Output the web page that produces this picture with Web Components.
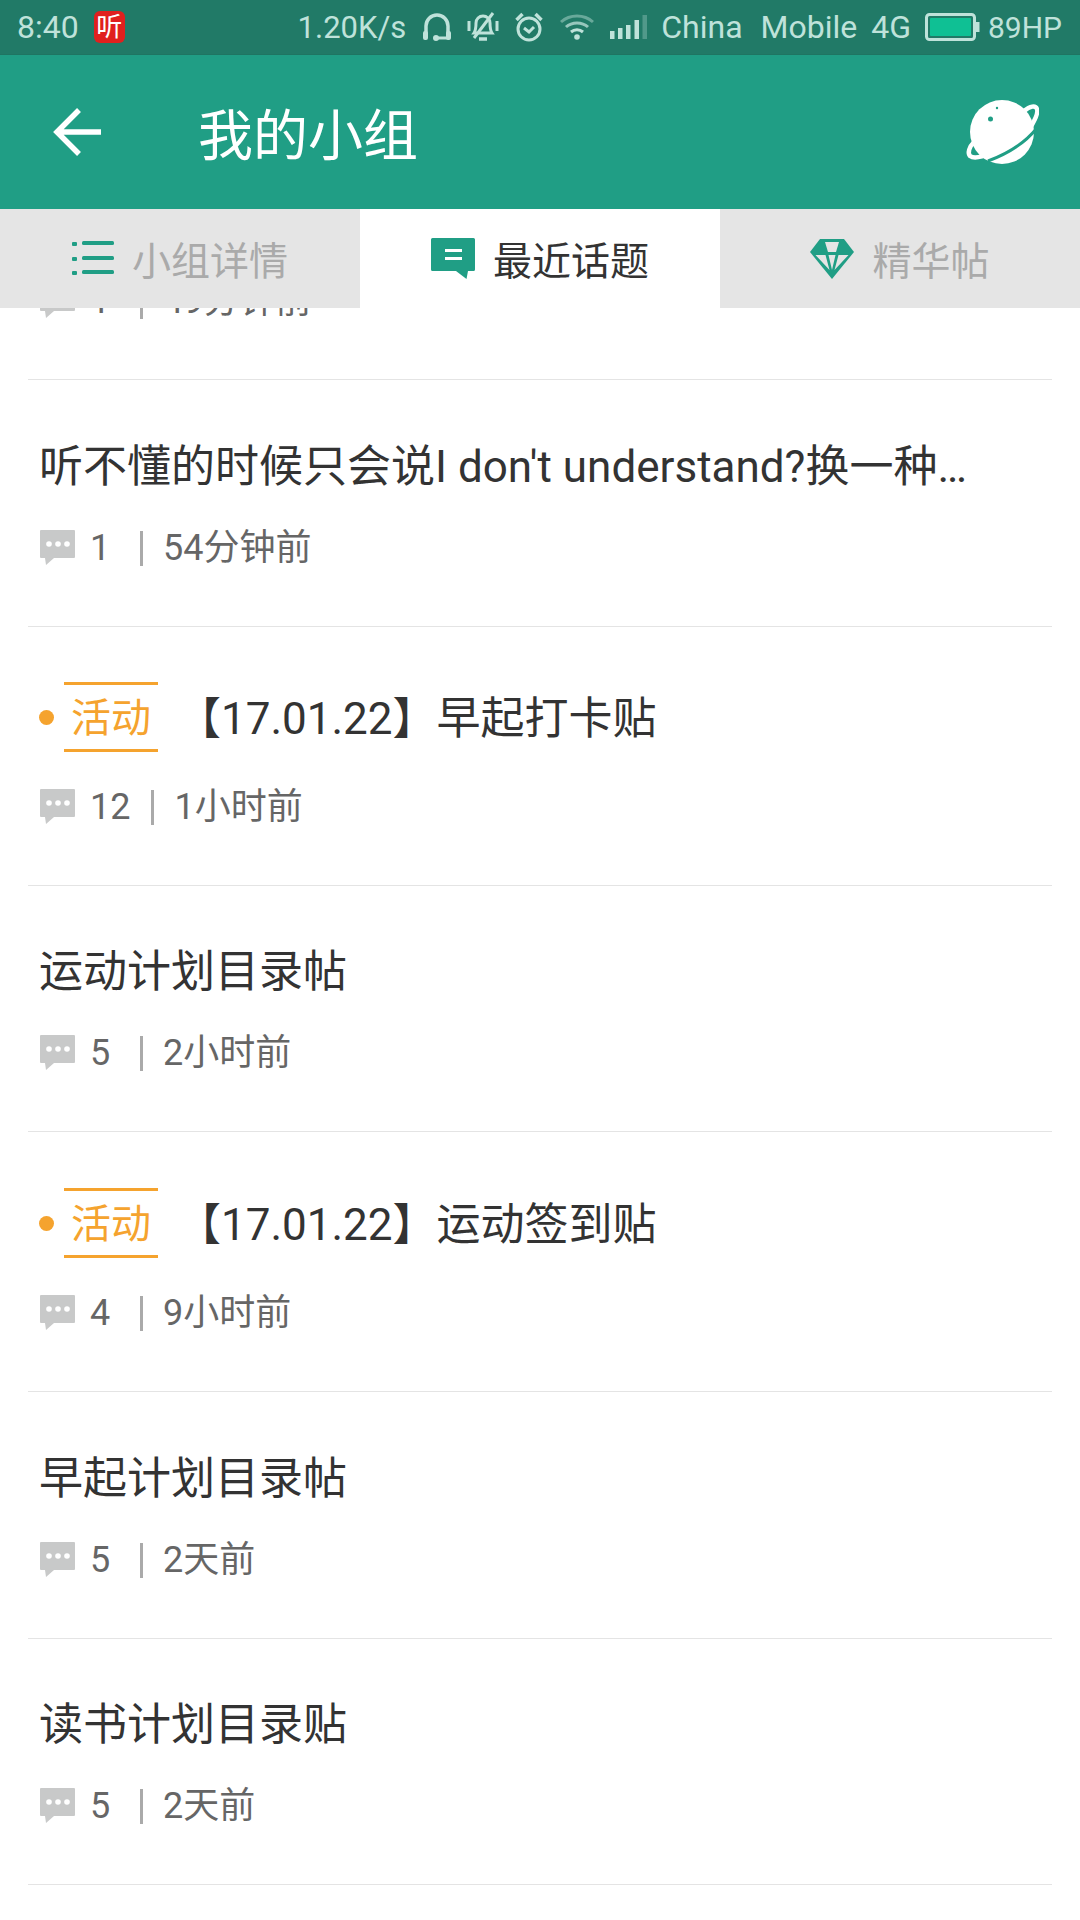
<!DOCTYPE html>
<html>
<head>
<meta charset="utf-8">
<style>
  html, body { margin: 0; padding: 0; background: #fff; }
  body {
    width: 1080px;
    height: 1920px;
    overflow: hidden;
    font-family: Roboto, "Noto Sans CJK SC", sans-serif;
  }
</style>
</head>
<body>
<status-bar></status-bar>
<app-bar title="我的小组"></app-bar>
<tab-bar>
  <tab-item icon="list">小组详情</tab-item>
  <tab-item icon="chat" active>最近话题</tab-item>
  <tab-item icon="gem">精华帖</tab-item>
</tab-bar>
<topic-list>
  <topic-row clipped count="1" time="49分钟前" height="72"></topic-row>
  <topic-row count="1" time="54分钟前" height="247">听不懂的时候只会说I don't understand?换一种…</topic-row>
  <topic-row activity count="12" time="1小时前" height="259">【17.01.22】早起打卡贴</topic-row>
  <topic-row count="5" time="2小时前" height="246">运动计划目录帖</topic-row>
  <topic-row activity count="4" time="9小时前" height="260">【17.01.22】运动签到贴</topic-row>
  <topic-row count="5" time="2天前" height="247">早起计划目录帖</topic-row>
  <topic-row count="5" time="2天前" height="246">读书计划目录贴</topic-row>
</topic-list>

<script>
const FONT = 'Roboto, "Noto Sans CJK SC", sans-serif';

class StatusBar extends HTMLElement {
  constructor() {
    super();
    this.attachShadow({ mode: 'open' });
    this.shadowRoot.innerHTML = `
      <style>
        :host {
          display: flex;
          align-items: center;
          height: 55px;
          box-sizing: border-box;
          padding: 0 18px 0 17px;
          background: #217a67;
          color: #bfe2da;
          font: 32px ${FONT};
          border-bottom: 1px solid #1f7562;
        }
        .app {
          width: 31px; height: 32px; margin-left: 15px;
          border-radius: 6px; background: #e0201e; color: #fff;
          display: flex; align-items: center; justify-content: center;
          font-size: 26px; line-height: 1;
        }
        .right { margin-left: auto; display: flex; align-items: center; }
        svg { display: block; }
        .carrier { word-spacing: 10px; }
      </style>
      <span>8:40</span>
      <span class="app">听</span>
      <div class="right">
        <span style="font-size:31px">1.20K/s</span>
        <svg style="margin-left:16px" width="30" height="28" viewBox="0 0 30 28" fill="none" stroke="#bfe2da" stroke-width="3.5">
          <path d="M4 21V13a11 11 0 0 1 22 0v8"/>
          <rect x="1" y="18" width="5" height="9" rx="2" fill="#bfe2da" stroke="none"/><rect x="24" y="18" width="5" height="9" rx="2" fill="#bfe2da" stroke="none"/>
          <path d="M14 25h12" stroke-width="3"/><circle cx="14" cy="25" r="3" fill="#bfe2da" stroke="none"/>
        </svg>
        <svg style="margin-left:15px" width="32" height="30" viewBox="0 0 32 30" fill="none" stroke="#bfe2da" stroke-width="3">
          <path d="M7 21c2-3 2-6 2-10a7 7 0 0 1 14 0c0 4 0 7 2 10z"/><path d="M12 27h8" stroke-width="3.5"/><path d="M26 1L7 26"/><path d="M2 9v10M30 9v10"/>
        </svg>
        <svg style="margin-left:16px" width="28" height="30" viewBox="0 0 28 30" fill="none" stroke="#bfe2da" stroke-width="3">
          <circle cx="14" cy="17" r="11"/><path d="M9 16l5 4 5-5"/><path d="M1.5 8l6-6M26.500 8l-6-6" stroke-width="3.5"/>
        </svg>
        <svg style="margin-left:16px" width="36" height="26" viewBox="0 0 36 26" fill="none" stroke="#bfe2da" stroke-width="3">
          <path d="M2 8C11 0 25 0 34 8" opacity=".45"/><path d="M7 13C13 7.500 23 7.500 29 13" opacity=".75"/><path d="M12 18c3.500-3 8.500-3 12 0"/><circle cx="18" cy="23" r="2.800" fill="#bfe2da" stroke="none"/>
        </svg>
        <svg style="margin-left:15px" width="37" height="24" viewBox="0 0 37 24" fill="#bfe2da">
          <rect x="0" y="16" width="4.500" height="8"/><rect x="8" y="13" width="4.500" height="11"/><rect x="16" y="10" width="4.500" height="14"/><rect x="24.500" y="5" width="4.500" height="19"/><rect x="32.500" y="0" width="4.500" height="24" opacity=".3"/>
        </svg>
        <span class="carrier" style="margin-left:14px">China Mobile</span>
        <span style="margin-left:14px">4G</span>
        <svg style="margin-left:14px" width="55" height="28" viewBox="0 0 55 28">
          <rect x="1.500" y="1.500" width="48" height="25" rx="3" fill="none" stroke="#bfe2da" stroke-width="3"/>
          <rect x="5" y="5" width="41" height="18" rx="1" fill="#0fc094"/>
          <rect x="51" y="9" width="3.500" height="10" fill="#bfe2da"/>
        </svg>
        <span style="margin-left:8px;font-size:30px">89HP</span>
      </div>
    `;
  }
}
customElements.define('status-bar', StatusBar);

class AppBar extends HTMLElement {
  constructor() {
    super();
    this.attachShadow({ mode: 'open' });
    this.shadowRoot.innerHTML = `
      <style>
        :host {
          display: flex;
          align-items: center;
          height: 154px;
          padding: 0 41px 0 52px;
          background: #209e85;
          color: #fff;
          font: 55px ${FONT};
        }
        h1 { margin: 0 0 3px 96px; font: inherit; }
        .planet { margin-left: auto; }
        svg { display: block; }
      </style>
      <svg style="margin-bottom:1px" width="50" height="50" viewBox="0 0 50 50" fill="none" stroke="#fff" stroke-width="5.500">
        <path d="M49 25H6M27 3L5 25l22 22"/>
      </svg>
      <h1>${this.getAttribute('title')}</h1>
      <svg class="planet" width="74" height="66" viewBox="15 15 74 66" fill="none">
        <circle cx="52" cy="48" r="32" fill="#fff"/>
        <path d="M87 44C75 59 57 70 38 77" stroke="#209e85" stroke-width="3"/>
        <path d="M74 27C80 22 85.500 21 87 25C88.500 29 85 36 80 44" stroke="#fff" stroke-width="4.500"/>
        <path d="M24 58C19 63 17.500 69 20 72C24 75 32 73 41 69" stroke="#fff" stroke-width="4.500"/>
        <circle cx="40.500" cy="35" r="2.500" fill="#209e85"/><circle cx="47" cy="24" r="1.200" fill="#209e85"/>
      </svg>
    `;
  }
}
customElements.define('app-bar', AppBar);

class TabBar extends HTMLElement {
  constructor() {
    super();
    this.attachShadow({ mode: 'open' });
    this.shadowRoot.innerHTML = `
      <style>
        :host { display: grid; grid-template-columns: 360px 360px 360px; height: 99px; }
      </style>
      <slot></slot>
    `;
  }
}
customElements.define('tab-bar', TabBar);

const TAB_ICONS = {
  list: `<svg width="42" height="36" viewBox="0 0 42 36" fill="#209e85">
      <rect x="0" y="1" width="5" height="4" rx="1"/><rect x="10" y="0" width="32" height="4" rx="1.500"/>
      <rect x="0" y="16" width="5" height="4" rx="1"/><rect x="10" y="15" width="32" height="4" rx="1.500"/>
      <rect x="0" y="30" width="5" height="4" rx="1"/><rect x="10" y="29" width="32" height="4" rx="1.500"/>
    </svg>`,
  chat: `<svg width="44" height="41" viewBox="0 0 44 41">
      <path d="M1.500 0h41A1.500 1.500 0 0 1 44 1.500v30a1.500 1.500 0 0 1-1.500 1.500H37l-1.500 8L25 33H1.500A1.500 1.500 0 0 1 0 31.500v-30A1.500 1.500 0 0 1 1.500 0z" fill="#209e85"/>
      <rect x="14" y="11" width="17" height="3" fill="#fff"/><rect x="14" y="19" width="17" height="3" fill="#fff"/>
    </svg>`,
  gem: `<svg width="44" height="40" viewBox="0 0 44 40">
      <path d="M10 0h24l10 13-22 27L0 13z" fill="#209e85"/>
      <path d="M15 3h14l-3 10H18z" fill="#e5e5e5"/>
      <path d="M5.500 16h10l4 15zM38.500 16h-10l-4 15zM18.500 16h7l-3.500 15z" fill="#e5e5e5"/>
    </svg>`
};

class TabItem extends HTMLElement {
  constructor() {
    super();
    this.attachShadow({ mode: 'open' });
    this.shadowRoot.innerHTML = `
      <style>
        :host {
          display: flex;
          align-items: center;
          justify-content: center;
          gap: 18px;
          background: #e5e5e5;
          color: #aaa;
          font: 39px ${FONT};
        }
        :host([active]) { background: #fff; color: #333; }
        span { margin-bottom: 2px; }
        svg { display: block; }
      </style>
      ${TAB_ICONS[this.getAttribute('icon')]}
      <span><slot></slot></span>
    `;
  }
}
customElements.define('tab-item', TabItem);

class TopicList extends HTMLElement {
  constructor() {
    super();
    this.attachShadow({ mode: 'open' });
    this.shadowRoot.innerHTML = `
      <style>
        :host { display: block; padding: 0 28px; }
      </style>
      <slot></slot>
    `;
  }
}
customElements.define('topic-list', TopicList);

class TopicRow extends HTMLElement {
  constructor() {
    super();
    this.attachShadow({ mode: 'open' });
    const activity = this.hasAttribute('activity');
    this.shadowRoot.innerHTML = `
      <style>
        :host {
          display: flex;
          flex-direction: column;
          justify-content: flex-end;
          overflow: hidden;
          box-sizing: border-box;
          height: ${this.getAttribute('height')}px;
          padding: 0 12px 56px;
          border-bottom: 1px solid #e4e4e4;
          color: #333;
        }
        .title {
          display: flex;
          align-items: center;
          height: 62px;
          line-height: 62px;
          margin: 0 0 28px -1px;
          font-size: 44px;
          white-space: nowrap;
        }
        :host([activity]) .title { height: 72px; margin-bottom: 32px; }
        :host([activity]) .text { margin-top: 4px; }
        :host([clipped]) .title { display: none; }
        .dot { width: 15px; height: 15px; border-radius: 50%; background: #f5a32e; margin-right: 10px; }
        .tag {
          box-sizing: border-box;
          width: 94px; height: 70px;
          margin-right: 19px;
          padding-top: 3px;
          border-top: 3px solid #f5a32e;
          border-bottom: 3px solid #f5a32e;
          color: #f5a32e;
          font-size: 40px;
          display: flex; align-items: center; justify-content: center;
        }
        .meta {
          display: flex;
          align-items: center;
          height: 44px;
          line-height: 44px;
          color: #666;
          font-size: 36px;
        }
        svg { display: block; margin-right: 14px; }
        .count { min-width: 29px; }
        .sep { width: 3px; height: 35px; background: #aaa; margin: 0 20px 0 21px; }
      </style>
      <div class="title">
        ${activity ? '<span class="dot"></span><span class="tag">活动</span>' : ''}
        <span class="text"><slot></slot></span>
      </div>
      <div class="meta">
        <svg width="36" height="36" viewBox="0 0 36 36">
          <path d="M1 0h33a1 1 0 0 1 1 1v26a1 1 0 0 1-1 1H14l-8 7-1-7H1a1 1 0 0 1-1-1V1a1 1 0 0 1 1-1z" fill="#c8c9c9"/>
          <circle cx="9" cy="14" r="2.800" fill="#fff"/><circle cx="18" cy="14" r="2.800" fill="#fff"/><circle cx="27" cy="14" r="2.800" fill="#fff"/>
        </svg>
        <span class="count">${this.getAttribute('count')}</span>
        <span class="sep"></span>
        <span>${this.getAttribute('time')}</span>
      </div>
    `;
  }
}
customElements.define('topic-row', TopicRow);
</script>
</body>
</html>
